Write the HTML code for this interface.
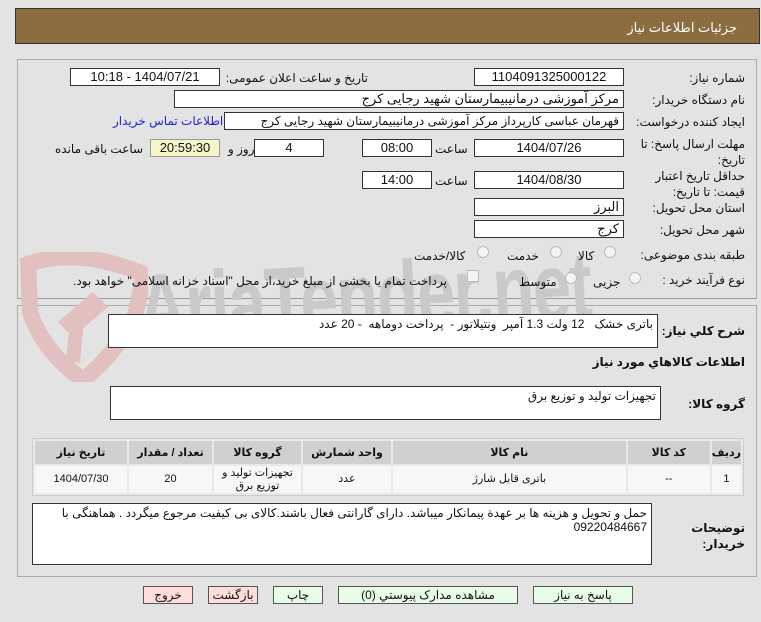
<!DOCTYPE html>
<html><head><meta charset="utf-8"><style>
body{margin:0;width:761px;height:622px;background:#e3e3e3;font-family:"Liberation Sans","DejaVu Sans",sans-serif;font-size:12px;color:#111;position:relative;overflow:hidden;direction:rtl}
.a{position:absolute;white-space:nowrap}
.box{position:absolute;background:#fff;border:1px solid #333;box-sizing:border-box;text-align:center;line-height:16px;font-size:13px}
.lbl{position:absolute;white-space:nowrap;font-size:12px;line-height:14px}
.b{font-weight:bold}
.ta{position:absolute;background:#fff;border:1px solid #333;box-sizing:border-box;padding:2px 4px;text-align:right;font-size:12px;line-height:14px}
.rad{position:absolute;width:10px;height:10px;border-radius:50%;border:1px solid #bbb;background:#f4f4f4}
table{position:absolute;border-collapse:separate;border-spacing:2px;background:#e8e8e8;border:1px solid #ccc;font-size:11px}
th{background:#d0d0d0;height:23px;font-weight:bold;padding:0}
td{background:#f7f7f7;height:27px;text-align:center;padding:0;line-height:13px}
.btn{position:absolute;top:586px;height:18px;border:1px solid #555;box-sizing:border-box;text-align:center;line-height:16px;font-size:12px}
</style></head><body>
<div class="a" style="left:15px;top:8px;width:745px;height:36px;background:#8c6d40;border:1px solid #333;box-sizing:border-box"></div>
<div class="a" style="right:24px;top:20px;color:#fff;font-size:13px">جزئیات اطلاعات نیاز</div>
<div class="a" style="left:17px;top:59px;width:740px;height:240px;border:1px solid #aaa;border-bottom-color:#999;box-sizing:border-box"></div>
<div class="a" style="left:17px;top:305px;width:740px;height:272px;border:1px solid #aaa;box-sizing:border-box"></div>

<svg class="a" style="left:18px;top:252px" width="130" height="130" viewBox="0 0 130 130">
<path d="M10 12 Q60 -5 126 22 L118 60 Q100 100 65 128 Q25 100 12 60 Z" fill="none" stroke="#e2c0c0" stroke-width="16"/>
<path d="M40 70 L75 40 L90 55 L55 85 Z" fill="#e2c0c0"/>
<path d="M60 60 L55 110" stroke="#e2c0c0" stroke-width="14"/>
</svg>
<div class="a" style="left:140px;top:262px;font-size:95px;line-height:1;font-weight:bold;color:#c9c9c9;direction:ltr;transform:rotate(-3deg) scaleX(0.72);transform-origin:left bottom;letter-spacing:-2px">AriaTender.net</div>

<div class="lbl" style="right:16px;top:71px">شماره نیاز:</div>
<div class="box" style="left:474px;top:68px;width:150px;height:18px">1104091325000122</div>
<div class="lbl" style="right:393px;top:71px">تاریخ و ساعت اعلان عمومی:</div>
<div class="box" style="left:70px;top:68px;width:150px;height:18px">1404/07/21 - 10:18</div>

<div class="lbl" style="right:16px;top:93px">نام دستگاه خریدار:</div>
<div class="box" style="left:174px;top:90px;width:450px;height:18px;text-align:right;padding-right:4px">مرکز آموزشی درمانیبیمارستان شهید رجایی کرج</div>

<div class="lbl" style="right:16px;top:115px">ایجاد کننده درخواست:</div>
<div class="box" style="left:224px;top:112px;width:400px;height:18px;text-align:right;padding-right:4px;font-size:12px">قهرمان عباسی کارپرداز مرکز آموزشی درمانیبیمارستان شهید رجایی کرج</div>
<div class="lbl" style="left:113px;top:114px;color:#2323d0">اطلاعات تماس خریدار</div>

<div class="lbl" style="right:16px;top:136px;text-align:right;line-height:16px">مهلت ارسال پاسخ: تا<br>تاریخ:</div>
<div class="box" style="left:474px;top:139px;width:150px;height:18px">1404/07/26</div>
<div class="lbl" style="left:435px;top:142px">ساعت</div>
<div class="box" style="left:362px;top:139px;width:70px;height:18px">08:00</div>
<div class="box" style="left:254px;top:139px;width:70px;height:18px">4</div>
<div class="lbl" style="left:228px;top:142px">روز و</div>
<div class="box" style="left:150px;top:139px;width:70px;height:18px;background:#f5f5c8;border-color:#999">20:59:30</div>
<div class="lbl" style="left:55px;top:142px">ساعت باقی مانده</div>

<div class="lbl" style="right:16px;top:168px;text-align:right;line-height:16px">حداقل تاریخ اعتبار<br>قیمت: تا تاریخ:</div>
<div class="box" style="left:474px;top:171px;width:150px;height:18px">1404/08/30</div>
<div class="lbl" style="left:435px;top:174px">ساعت</div>
<div class="box" style="left:362px;top:171px;width:70px;height:18px">14:00</div>

<div class="lbl" style="right:16px;top:201px">استان محل تحویل:</div>
<div class="box" style="left:474px;top:198px;width:150px;height:18px;text-align:right;padding-right:4px">البرز</div>
<div class="lbl" style="right:16px;top:223px">شهر محل تحویل:</div>
<div class="box" style="left:474px;top:220px;width:150px;height:18px;text-align:right;padding-right:4px">کرج</div>

<div class="lbl" style="right:16px;top:248px">طبقه بندی موضوعی:</div>
<div class="rad" style="left:604px;top:246px"></div><div class="lbl" style="left:578px;top:249px">کالا</div>
<div class="rad" style="left:550px;top:246px"></div><div class="lbl" style="left:507px;top:249px">خدمت</div>
<div class="rad" style="left:477px;top:246px"></div><div class="lbl" style="left:414px;top:249px">کالا/خدمت</div>

<div class="lbl" style="right:16px;top:273px">نوع فرآیند خرید :</div>
<div class="rad" style="left:629px;top:272px"></div><div class="lbl" style="left:593px;top:275px">جزیی</div>
<div class="rad" style="left:565px;top:272px"></div><div class="lbl" style="left:519px;top:275px">متوسط</div>
<div class="a" style="left:467px;top:270px;width:10px;height:10px;border:1px solid #bbb;background:#f4f4f4"></div>
<div class="lbl" style="left:73px;top:274px">پرداخت تمام یا بخشی از مبلغ خرید،از محل "اسناد خزانه اسلامی" خواهد بود.</div>

<div class="lbl b" style="right:16px;top:324px">شرح کلي نياز:</div>
<div class="ta" style="left:108px;top:314px;width:550px;height:34px">باتری خشک &nbsp; 12 ولت 1.3 آمپر &nbsp;ونتیلاتور - &nbsp;پرداخت دوماهه &nbsp;- 20 عدد</div>
<div class="lbl b" style="right:16px;top:355px">اطلاعات کالاهاي مورد نياز</div>
<div class="lbl b" style="right:16px;top:397px">گروه کالا:</div>
<div class="ta" style="left:110px;top:386px;width:551px;height:34px">تجهیزات تولید و توزیع برق</div>

<table style="left:32px;top:438px;width:712px">
<tr><th style="width:27px">ردیف</th><th style="width:82px">کد کالا</th><th>نام کالا</th><th style="width:88px">واحد شمارش</th><th style="width:87px">گروه کالا</th><th style="width:83px">تعداد / مقدار</th><th style="width:92px">تاریخ نیاز</th></tr>
<tr><td>1</td><td>--</td><td>باتری قابل شارژ</td><td>عدد</td><td>تجهیزات تولید و<br>توزیع برق</td><td>20</td><td>1404/07/30</td></tr>
</table>

<div class="lbl b" style="right:16px;top:520px;line-height:16px;text-align:right">توضیحات<br>خریدار:</div>
<div class="ta" style="left:32px;top:503px;width:620px;height:62px">حمل و تحویل و هزینه ها بر عهدة پیمانکار میباشد. دارای گارانتی فعال باشند.کالای بی کیفیت مرجوع میگردد . هماهنگی با 09220484667</div>

<div class="btn" style="left:143px;width:50px;background:#fdd">خروج</div>
<div class="btn" style="left:208px;width:50px;background:#fdd">بازگشت</div>
<div class="btn" style="left:273px;width:50px;background:#e8fde8">چاپ</div>
<div class="btn" style="left:338px;width:180px;background:#e8fde8">مشاهده مدارک پیوستي (0)</div>
<div class="btn" style="left:533px;width:100px;background:#e8fde8">پاسخ به نیاز</div>
</body></html>
